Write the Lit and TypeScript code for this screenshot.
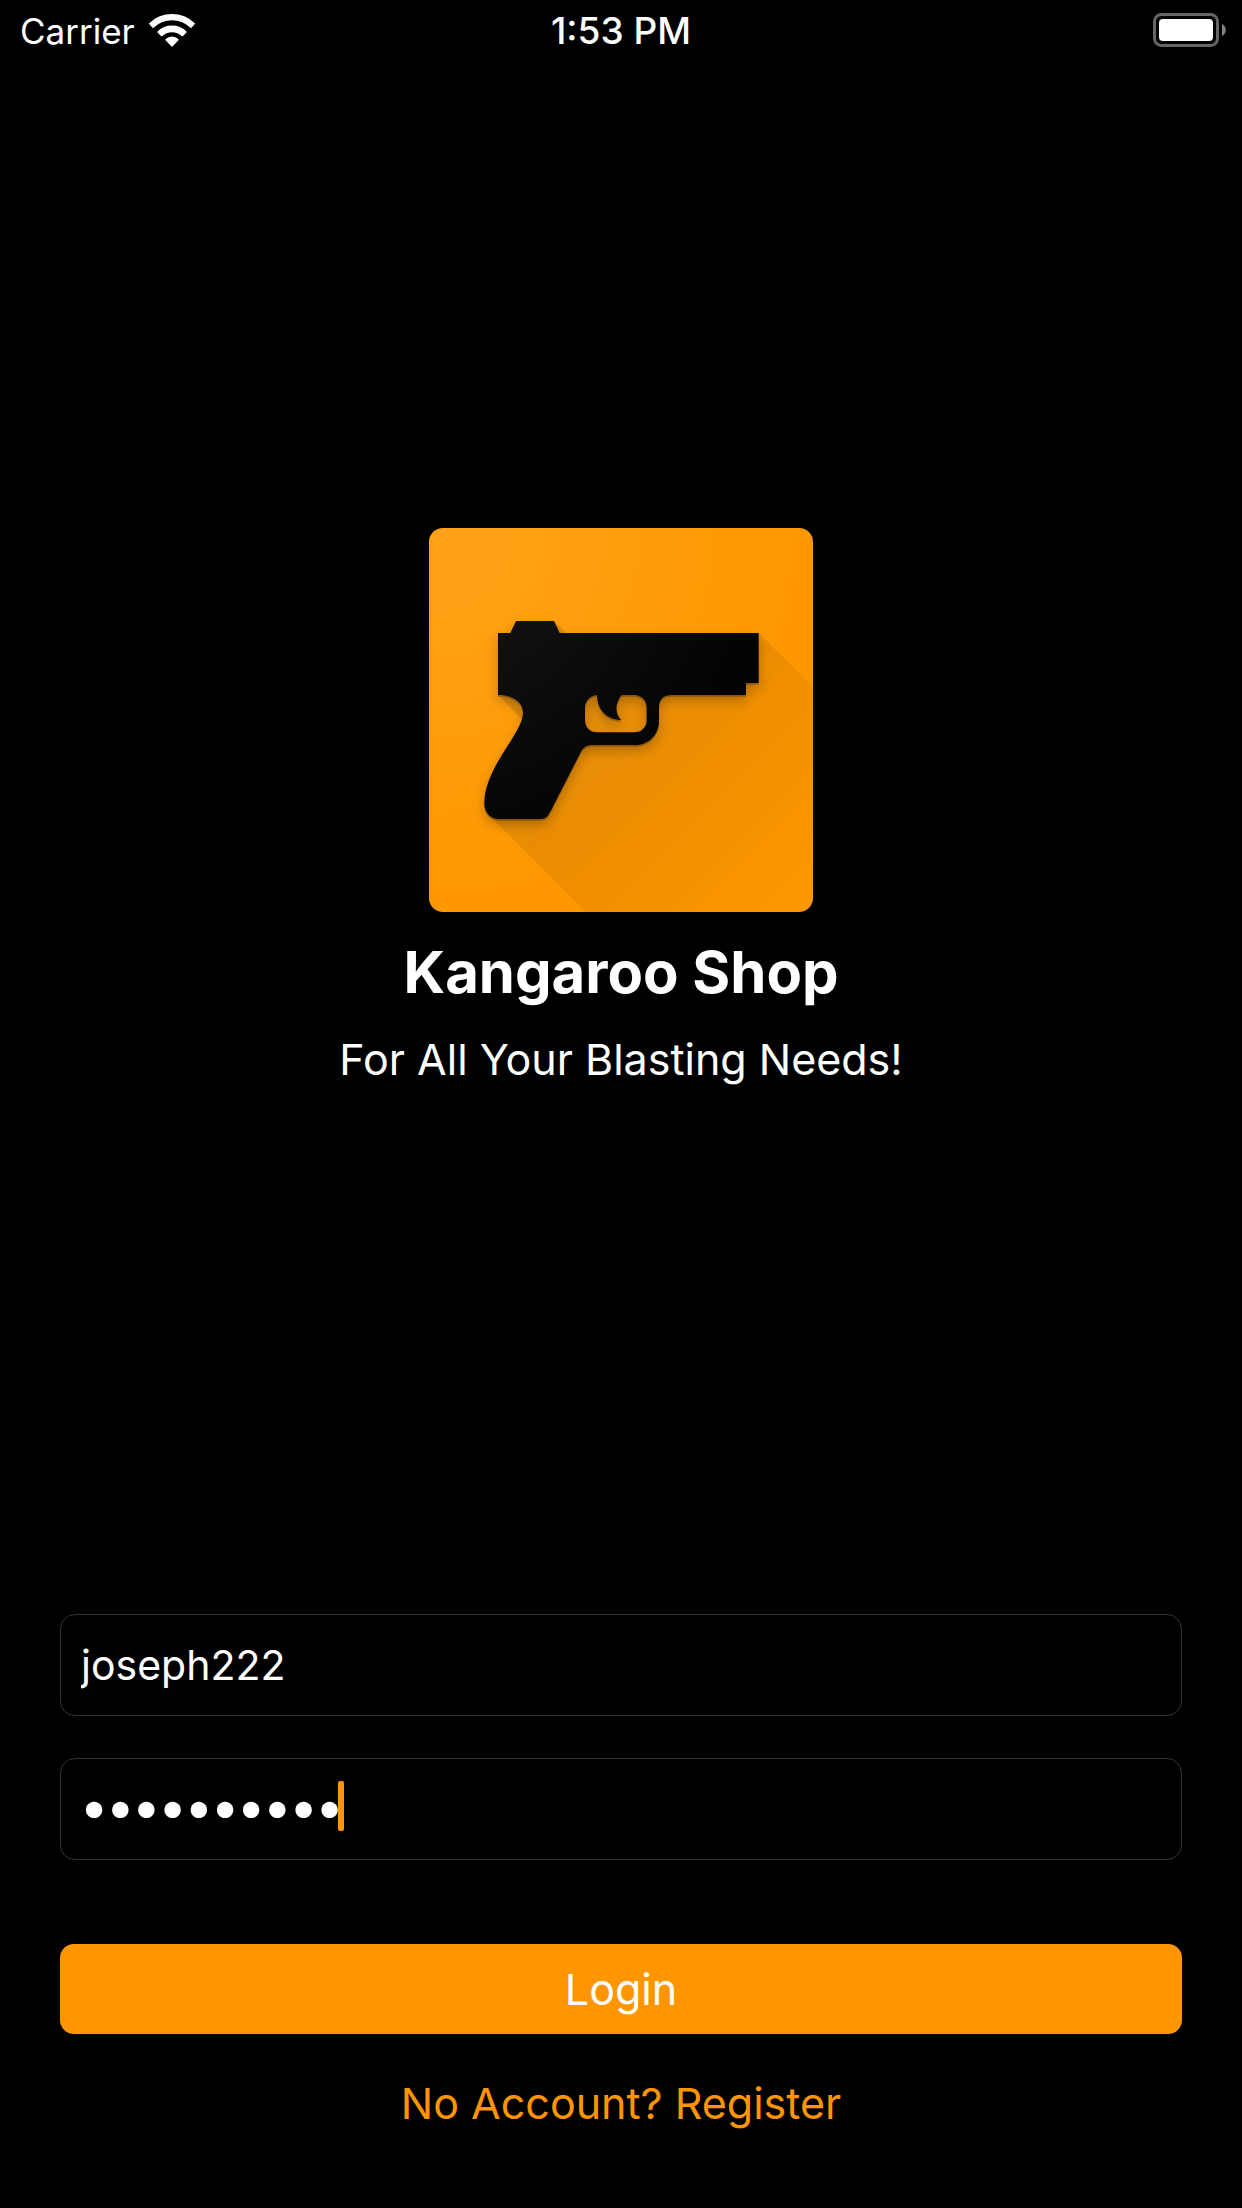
import { LitElement, html, css, svg } from "lit";
import { customElement, state } from "lit/decorators.js";

const GUN =
  "M234 339H271L288 303H402L419 339H1016V489H978V525H755Q717 525 717 563V603C717 643 687 675 647 675H514Q494 675 484 693L392 873Q381 897 364 897H232C206 893 192 873 193 848C195 738 309 640 309 578C309 550 285 525 234 525Z" +
  "M531 525C515 525 495 540 495 563V600C495 622 510 637 531 637H643C665 637 680 621 680 600V563C680 540 664 525 643 525H605C582 552 587 585 604 600C565 600 531 572 531 525Z";

@customElement("status-bar")
export class StatusBar extends LitElement {
  static styles = css`
    :host {
      display: grid;
      grid-template-columns: 1fr auto 1fr;
      align-items: center;
      height: 60px;
      padding: 0 16px;
      line-height: 44px;
    }
    .network {
      display: flex;
      align-items: center;
      gap: 14px;
      padding-left: 4px;
    }
    .carrier,
    .time {
      padding-top: 2px;
    }
    .carrier {
      font-size: 35px;
    }
    .time {
      font-size: 37px;
      font-weight: 500;
    }
    .battery {
      justify-self: end;
    }
    svg {
      display: block;
    }
  `;

  render() {
    return html`
      <div class="network">
        <span class="carrier">Carrier</span>
        <svg width="46" height="34" viewBox="447 37 138 102" fill="#fff" stroke="#fff" stroke-width="4" stroke-linejoin="round" role="img" aria-label="Wi-Fi">
          <path d="M449 69A97 97 0 0 1 583 69L573 80A82 82 0 0 0 459 80Z" />
          <path d="M474 94A60 60 0 0 1 558 94L547 105A45 45 0 0 0 485 105Z" />
          <path d="M498 117A26 26 0 0 1 534 117L516 136Z" />
        </svg>
      </div>
      <span class="time">1:53 PM</span>
      <svg class="battery" width="73" height="34" viewBox="0 0 73 34" role="img" aria-label="Battery full">
        <rect x="1.5" y="1.5" width="63" height="31" rx="7" fill="none" stroke="#666" stroke-width="3" />
        <rect x="6" y="6" width="54" height="22" rx="4" fill="#fff" />
        <path d="M69 11C74 13 74 21 69 23Z" fill="#808080" />
      </svg>
    `;
  }
}

@customElement("shop-logo")
export class ShopLogo extends LitElement {
  static styles = css`
    :host {
      display: block;
      width: 384px;
      border-radius: 14px;
      overflow: hidden;
    }
    svg {
      display: block;
      width: 100%;
    }
  `;

  render() {
    return html`
      <svg viewBox="27 24 1152 1152" role="img" aria-label="Kangaroo Shop logo">
        <defs>
          <linearGradient id="cast" gradientUnits="userSpaceOnUse" x1="400" y1="400" x2="1176" y2="1176">
            <stop offset="0" stop-color="#000" stop-opacity="0.12" />
            <stop offset="0.74" stop-color="#000" stop-opacity="0.04" />
            <stop offset="0.76" stop-color="#000" stop-opacity="0.03" />
            <stop offset="1" stop-color="#000" stop-opacity="0" />
          </linearGradient>
          <radialGradient id="finish" gradientUnits="userSpaceOnUse" cx="27" cy="24" r="1130">
            <stop offset="0" stop-color="#fff" stop-opacity="0.1" />
            <stop offset="1" stop-color="#fff" stop-opacity="0" />
          </radialGradient>
          <filter id="soft" x="-20%" y="-20%" width="140%" height="140%">
            <feGaussianBlur stdDeviation="18" />
          </filter>
        </defs>
        <rect x="27" y="24" width="1152" height="1152" fill="#ff9800" />
        <path d="M402 303L438 339H1016L1300 623V1300H622L215 893L309 600L234 525V400Z" fill="url(#cast)" />
        ${svg`<path d=${GUN} fill="#000" fill-opacity="0.25" fill-rule="evenodd" filter="url(#soft)" transform="translate(0 18)" />
        <path d=${GUN} fill="#000" fill-opacity="0.25" fill-rule="evenodd" transform="translate(0 5)" />
        <path d=${GUN} fill="#000" fill-rule="evenodd" />`}
        <rect x="27" y="24" width="1152" height="1152" fill="url(#finish)" />
      </svg>
    `;
  }
}

@customElement("app-root")
export class AppRoot extends LitElement {
  @state() private username = "joseph222";
  @state() private password = "kangaroo22";

  static styles = css`
    :host {
      display: flex;
      flex-direction: column;
      min-height: 100vh;
      box-sizing: border-box;
      background: #000;
      color: #fff;
      font-family: Inter, "Liberation Sans", sans-serif;
    }
    .hero {
      flex: 1;
      display: flex;
      flex-direction: column;
      align-items: center;
      justify-content: center;
      gap: 24px;
      padding-bottom: 60px;
      text-align: center;
    }
    .title {
      margin: 0;
      font-size: 58px;
      line-height: 72px;
      font-weight: 700;
    }
    .tagline {
      margin: 0;
      font-size: 43px;
      line-height: 54px;
    }
    .form {
      display: flex;
      flex-direction: column;
      gap: 42px;
      padding: 0 60px 78px;
    }
    .field {
      display: flex;
      align-items: center;
      height: 102px;
      box-sizing: border-box;
      padding: 0 20px;
      border: 1px solid #333;
      border-radius: 15px;
      cursor: text;
    }
    .input {
      flex: 1;
      min-width: 0;
      padding: 0;
      border: 0;
      outline: 0;
      background: none;
      color: inherit;
      font: inherit;
      font-size: 41px;
      line-height: 50px;
      caret-color: transparent;
    }
    .protected {
      padding-bottom: 6px;
    }
    .secret {
      flex: none;
      field-sizing: content;
      max-width: 100%;
      font-size: 52px;
      font-weight: 600;
    }
    .caret {
      width: 6px;
      height: 50px;
      margin-left: -5px;
      border-radius: 2px;
      background: #ff9500;
    }
    .login {
      height: 90px;
      margin-top: 42px;
      padding: 0;
      border: 0;
      border-radius: 14px;
      background: #ff9500;
      color: #fff;
      font: inherit;
      font-size: 43px;
      line-height: 54px;
      cursor: pointer;
    }
    .register {
      align-self: center;
      color: #ff9500;
      font-size: 43px;
      line-height: 54px;
      text-decoration: none;
    }
  `;

  private onUsername(event: Event) {
    this.username = (event.target as HTMLInputElement).value;
  }

  private onPassword(event: Event) {
    this.password = (event.target as HTMLInputElement).value;
  }

  private onSubmit(event: Event) {
    event.preventDefault();
  }

  render() {
    return html`
      <status-bar></status-bar>
      <main class="hero">
        <shop-logo></shop-logo>
        <h1 class="title">Kangaroo Shop</h1>
        <p class="tagline">For All Your Blasting Needs!</p>
      </main>
      <form class="form" @submit=${this.onSubmit}>
        <label class="field">
          <input class="input" type="text" aria-label="Username" autocomplete="username" .value=${this.username} @input=${this.onUsername} />
        </label>
        <label class="field protected">
          <input class="input secret" type="password" aria-label="Password" autocomplete="current-password" .value=${this.password} @input=${this.onPassword} />
          <span class="caret"></span>
        </label>
        <button class="login" type="submit">Login</button>
        <a class="register" href="#register">No Account? Register</a>
      </form>
    `;
  }
}
